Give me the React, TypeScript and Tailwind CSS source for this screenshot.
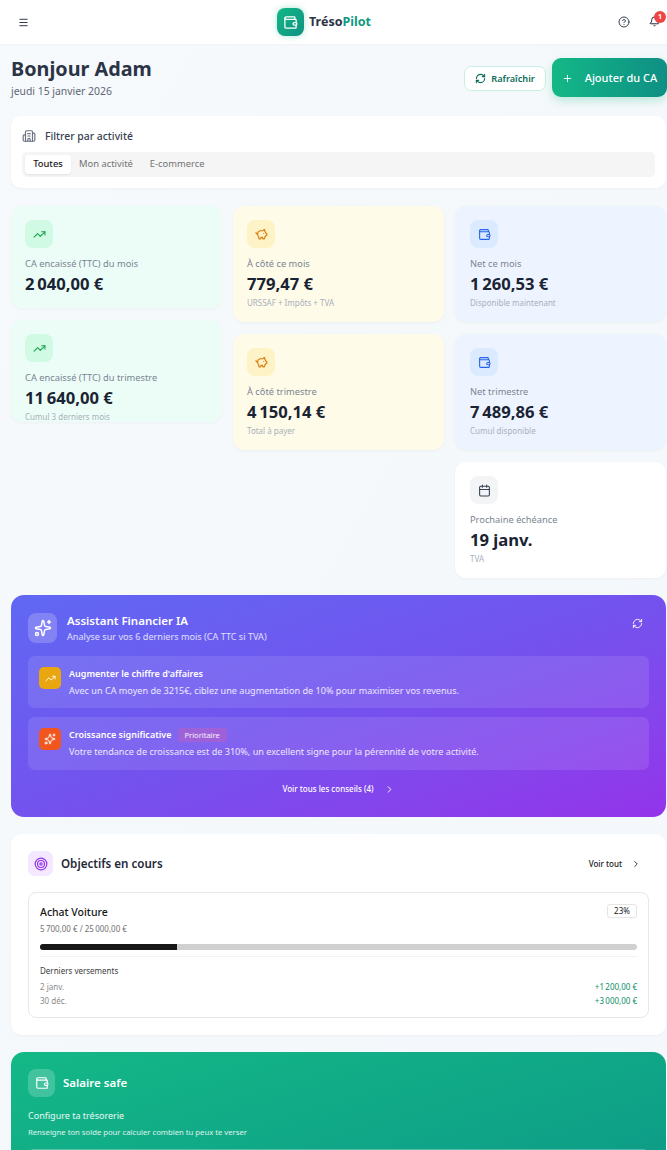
import React from "react";
import { Menu, CircleHelp, Bell, Wallet, RefreshCw, Plus, Building2, TrendingUp, PiggyBank, Calendar, Sparkles, ChevronRight, Target } from "lucide-react";

type CardProps = { icon: React.ReactNode; iconBg: string; bg: string; label: string; value: string; sub?: string; h: string; pad?: string };

function Card({ icon, iconBg, bg, label, value, sub, h, pad = "p-[14px]" }: CardProps) {
  return (
    <div className={`${bg} ${h} ${pad} rounded-[11px] shadow-[0_1px_3px_rgba(0,0,0,0.04)]`}>
      <div className={`${iconBg} w-[28px] h-[28px] rounded-[8px] flex items-center justify-center`}>{icon}</div>
      <div className="mt-[9px] text-[9.3px] leading-[14px] text-[#7a8491]">{label}</div>
      <div className="mt-[1px] text-[16.6px] leading-[24px] font-bold text-[#1a2333]">{value}</div>
      {sub && <div className="mt-[1px] text-[8px] leading-[12px] text-[#a9b0ba]">{sub}</div>}
    </div>
  );
}

export default function App() {
  const green = <TrendingUp size={13} className="text-[#16a34a]" />;
  const pig = <PiggyBank size={13} className="text-[#d97706]" />;
  const wal = <Wallet size={13} className="text-[#2563eb]" />;
  const pad3 = "pl-[15px] pr-[13px] py-[14px]";
  return (
    <div className="w-[667px] h-[1150px] overflow-hidden bg-gradient-to-br from-[#f7fafc] to-[#f4f7fb] font-['Noto_Sans',sans-serif] text-[#1a2333]">
      <header className="h-[44px] bg-white flex items-center justify-between pl-[18px] pr-[6px] relative shadow-[0_1px_2px_rgba(0,0,0,0.03)]">
        <Menu size={11} className="text-[#1f2937]" />
        <div className="absolute left-[277px] top-[8px] flex items-center gap-[5px]">
          <div className="w-[27px] h-[28px] rounded-[8px] bg-gradient-to-br from-[#14b886] to-[#0f9180] flex items-center justify-center shadow-[0_0_6px_rgba(16,185,129,0.35)]">
            <Wallet size={15} className="text-white" />
          </div>
          <span className="text-[12.5px] font-bold leading-none text-[#2b3446]">Tréso<span className="text-[#0f9a80]">Pilot</span></span>
        </div>
        <div className="flex items-center gap-[19px]">
          <CircleHelp size={12} className="text-[#374151]" />
          <div className="relative w-[12px] h-[12px]">
            <Bell size={11} className="text-[#111827]" />
            <span className="absolute -top-[5px] left-[5px] w-[12px] h-[12px] rounded-full bg-[#ef4444] text-white text-[7px] font-bold flex items-center justify-center">1</span>
          </div>
        </div>
      </header>

      <main className="pl-[11px] flex flex-col">
        <div className="flex justify-between items-start pt-[14px] h-[72px]">
          <div>
            <h1 className="text-[19.8px] leading-[22px] font-bold text-[#2b3446]">Bonjour Adam</h1>
            <p className="text-[10.4px] leading-[16px] mt-[3px] text-[#5c6674]">jeudi 15 janvier 2026</p>
          </div>
          <div className="flex items-start gap-[6px]">
            <button className="mt-[8px] w-[82px] h-[25px] rounded-[7px] bg-white border border-[#c9efe2] flex items-center justify-center gap-[5px] text-[9.2px] font-semibold text-[#0f6e5a]">
              <RefreshCw size={11} strokeWidth={2.4} /> Rafraîchir
            </button>
            <button className="w-[115px] h-[39px] pt-[1px] rounded-[9px] bg-gradient-to-r from-[#14b886] to-[#0f8f84] text-white text-[11px] font-medium flex items-center justify-center gap-[12px] shadow-[0_4px_10px_rgba(16,185,129,0.25)]">
              <Plus size={11} /> Ajouter du CA
            </button>
          </div>
        </div>

        <section className="w-[655px] h-[72px] bg-white rounded-[10px] px-[11px] pt-[13px] shadow-[0_1px_3px_rgba(0,0,0,0.04)]">
          <div className="flex items-center gap-[9px] text-[10.4px] leading-[14px] font-medium text-[#374151]">
            <Building2 size={14} className="text-[#6b7280]" /> Filtrer par activité
          </div>
          <div className="mt-[9px] h-[25px] bg-[#f5f5f5] rounded-[5px] flex items-center px-[3px] text-[9.4px] text-[#737373]">
            <span className="h-[19px] w-[46px] bg-white rounded-[4px] flex items-center justify-center font-medium text-[#171717] shadow-[0_1px_2px_rgba(0,0,0,0.08)]">Toutes</span>
            <span className="ml-[8px]">Mon activité</span>
            <span className="ml-[17px]">E-commerce</span>
          </div>
        </section>

        <div className="w-[655px] mt-[18px] flex gap-[11px] items-start">
          <div className="flex-1 flex flex-col gap-[12px]">
            <Card icon={green} iconBg="bg-[#d1fae5]" bg="bg-[#ecfdf7]" label="CA encaissé (TTC) du mois" value={"2\u202f040,00 €"} h="h-[102px]" />
            <Card icon={green} iconBg="bg-[#d1fae5]" bg="bg-[#ecfdf7]" label="CA encaissé (TTC) du trimestre" value={"11\u202f640,00 €"} sub="Cumul 3 derniers mois" h="h-[102px]" />
          </div>
          <div className="flex-1 flex flex-col gap-[12px]">
            <Card icon={pig} iconBg="bg-[#fef3c7]" bg="bg-[#fffbe9]" label="À côté ce mois" value="779,47 €" sub="URSSAF + Impôts + TVA" h="h-[116px]" />
            <Card icon={pig} iconBg="bg-[#fef3c7]" bg="bg-[#fffbe9]" label="À côté trimestre" value={"4\u202f150,14 €"} sub="Total à payer" h="h-[116px]" />
          </div>
          <div className="flex-1 flex flex-col gap-[12px]">
            <Card pad={pad3} icon={wal} iconBg="bg-[#dbeafe]" bg="bg-[#eef4ff]" label="Net ce mois" value={"1\u202f260,53 €"} sub="Disponible maintenant" h="h-[116px]" />
            <Card pad={pad3} icon={wal} iconBg="bg-[#dbeafe]" bg="bg-[#eef4ff]" label="Net trimestre" value={"7\u202f489,86 €"} sub="Cumul disponible" h="h-[116px]" />
            <Card pad={pad3} icon={<Calendar size={13} className="text-[#374151]" />} iconBg="bg-[#f3f4f6]" bg="bg-white" label="Prochaine échéance" value="19 janv." sub="TVA" h="h-[116px]" />
          </div>
        </div>

        <section className="w-[655px] mt-[17px] h-[222px] rounded-[13px] bg-gradient-to-br from-[#5f68f3] via-[#7352ee] to-[#9333ea] text-white px-[17px] pt-[18px]">
          <div className="flex justify-between">
            <div className="flex gap-[10px]">
              <div className="w-[29px] h-[30px] rounded-[8px] bg-white/20 flex items-center justify-center"><Sparkles size={18} /></div>
              <div>
                <div className="text-[11.5px] leading-[16px] font-semibold">Assistant Financier IA</div>
                <div className="text-[9.1px] leading-[14px] mt-[1px] text-white/80">Analyse sur vos 6 derniers mois (CA TTC si TVA)</div>
              </div>
            </div>
            <RefreshCw size={11} className="mr-[6px] mt-[5px]" />
          </div>
          <div className="mt-[12px] h-[52px] rounded-[7px] bg-white/10 flex px-[11px] pt-[11px] gap-[8px]">
            <div className="w-[22px] h-[22px] rounded-[5px] bg-[#eaa60f] flex items-center justify-center shrink-0"><TrendingUp size={11} /></div>
            <div>
              <div className="text-[9px] leading-[14px] font-semibold">Augmenter le chiffre d'affaires</div>
              <div className="text-[9.1px] leading-[14px] mt-[2px] pt-[1px] text-white/85">Avec un CA moyen de 3215€, ciblez une augmentation de 10% pour maximiser vos revenus.</div>
            </div>
          </div>
          <div className="mt-[9px] h-[53px] rounded-[7px] bg-white/10 flex px-[11px] pt-[11px] gap-[8px]">
            <div className="w-[22px] h-[22px] rounded-[5px] bg-[#f2561f] flex items-center justify-center shrink-0"><Sparkles size={12} /></div>
            <div>
              <div className="flex items-center gap-[6px]">
                <span className="text-[9px] leading-[14px] font-semibold">Croissance significative</span>
                <span className="h-[14px] px-[7px] rounded-[3px] bg-[#e85aa0]/30 text-[7.5px] leading-[14px] text-white/90">Prioritaire</span>
              </div>
              <div className="text-[9.1px] leading-[14px] mt-[2px] pt-[1px] text-white/85">Votre tendance de croissance est de 310%, un excellent signe pour la pérennité de votre activité.</div>
            </div>
          </div>
          <div className="mt-[13px] flex items-center justify-center gap-[10px] text-[8px] font-medium">
            Voir tous les conseils (4) <ChevronRight size={11} />
          </div>
        </section>

        <section className="w-[655px] mt-[17px] h-[201px] bg-white rounded-[11px] px-[17px] pt-[17px] shadow-[0_1px_3px_rgba(0,0,0,0.03)]">
          <div className="flex items-center justify-between">
            <div className="flex items-center gap-[8px]">
              <div className="w-[25px] h-[25px] rounded-[7px] bg-[#f3e8ff] flex items-center justify-center"><Target size={14} className="text-[#9333ea]" /></div>
              <span className="text-[11.6px] font-semibold text-[#1f2937]">Objectifs en cours</span>
            </div>
            <div className="flex items-center gap-[9px] text-[8px] font-medium text-[#171717] pr-[8px]">Voir tout <ChevronRight size={10} /></div>
          </div>
          <div className="mt-[16px] h-[126px] rounded-[8px] border border-[#e8e8e8] px-[11px] pt-[11px]">
            <div className="flex justify-between">
              <div>
                <div className="text-[10.5px] leading-[16px] font-medium text-[#171717]">Achat Voiture</div>
                <div className="text-[8px] leading-[12px] mt-[3px] text-[#737373]">{"5\u202f700,00 € / 25\u202f000,00 €"}</div>
              </div>
              <span className="h-[14px] w-[30px] rounded-[3px] border border-[#e5e5e5] text-[8px] leading-[12px] text-center text-[#171717]">23%</span>
            </div>
            <div className="mt-[9px] h-[6px] rounded-full bg-[#d0d0d0] overflow-hidden">
              <div className="h-full w-[23%] bg-[#171717]" />
            </div>
            <div className="mt-[6px] pt-[8px] border-t border-[#f2f2f2]">
              <div className="text-[8px] leading-[12px] text-[#404040]">Derniers versements</div>
              <div className="mt-[3px] flex justify-between text-[8px] leading-[14px] text-[#8a8a8a]"><span>2 janv.</span><span className="text-[#0f8f6a]">{"+1\u202f200,00 €"}</span></div>
              <div className="flex justify-between text-[8px] leading-[14px] text-[#8a8a8a]"><span>30 déc.</span><span className="text-[#0f8f6a]">{"+3\u202f000,00 €"}</span></div>
            </div>
          </div>
        </section>

        <section className="w-[655px] mt-[17px] h-[200px] rounded-[13px] bg-gradient-to-br from-[#14b886] to-[#0d9488] text-white px-[17px] pt-[17px]">
          <div className="flex items-center gap-[8px]">
            <div className="w-[27px] h-[28px] rounded-[8px] bg-white/20 flex items-center justify-center"><Wallet size={14} /></div>
            <span className="text-[11.5px] font-semibold">Salaire safe</span>
          </div>
          <div className="mt-[12px] text-[9px] leading-[14px] text-white/90">Configure ta trésorerie</div>
          <div className="mt-[3px] text-[7.7px] leading-[12px] text-white/85">Renseigne ton solde pour calculer combien tu peux te verser</div>
          <div className="mt-[11px] h-[30px] rounded-[6px] bg-white/10 border border-white/20" />
        </section>
      </main>
    </div>
  );
}
